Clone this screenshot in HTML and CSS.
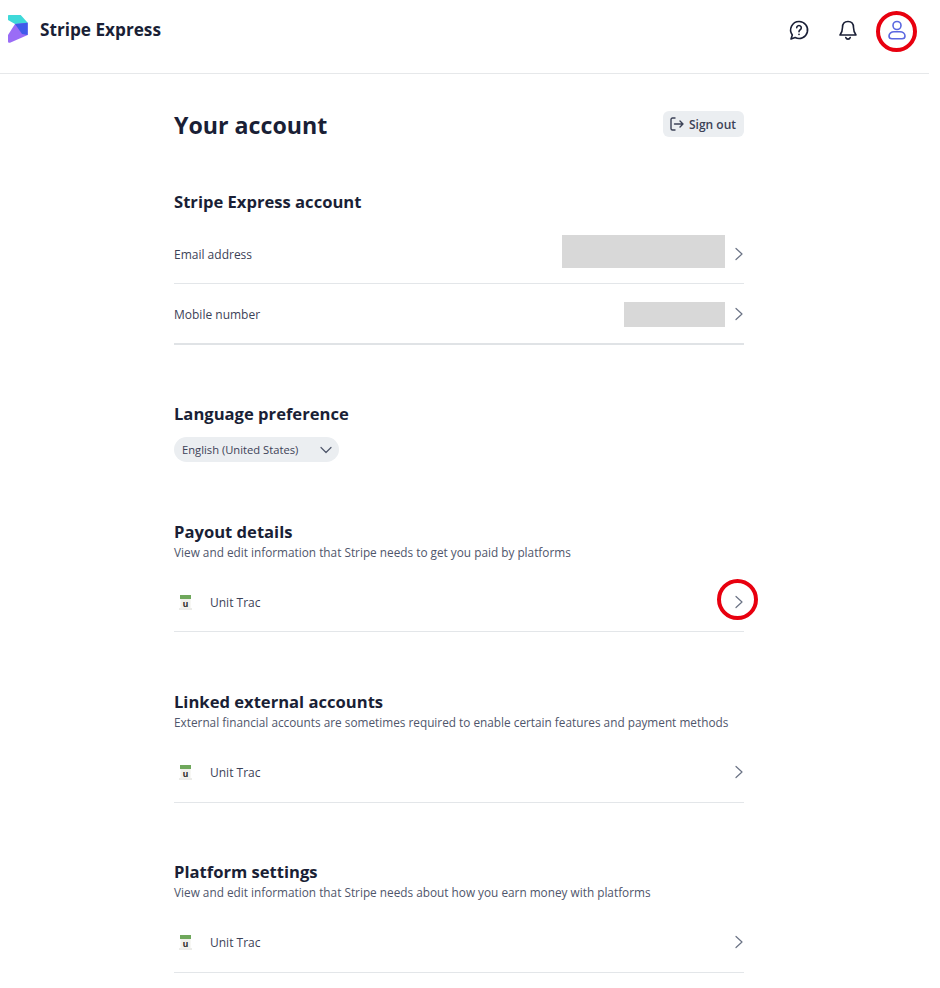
FILE: index.html
```html
<!DOCTYPE html>
<html lang="en">
<head>
<meta charset="utf-8">
<title>Stripe Express</title>
<link rel="stylesheet" href="styles.css">
</head>
<body>
<div class="page">
  <header class="topbar">
    <div class="brand">
      <svg class="logo" width="20" height="28" viewBox="0 0 20 28">
        <path d="M0 1C0 .4.4 0 1 0h11.700l7 7.700L8.700 12 7 9 0 5z" fill="#3fd9d9"/>
        <path d="M19.700 7.700V20L2 27.700c-1 .4-2-.2-2-1.300V20L7 9z" fill="#9a6cf6"/>
        <path d="M7 9 19.700 7.700V20L14 19z" fill="#3f5bea"/>
      </svg>
      <span class="brand-name">Stripe Express</span>
    </div>
    <div class="top-actions">
      <svg class="top-icon" width="22" height="22" viewBox="0 0 22 22" fill="none" stroke="#1a1f36" stroke-width="1.600" stroke-linecap="round" stroke-linejoin="round">
        <path d="M11 2.500a8.500 8.500 0 1 1-3.900 16L3 20l1.300-4A8.500 8.500 0 0 1 11 2.500z"/>
        <path d="M8.700 8.800a2.300 2.300 0 1 1 3.500 2c-.8.500-1.200 1-1.200 1.900"/>
        <path d="M11 15.300v.2"/>
      </svg>
      <svg class="top-icon" width="22" height="22" viewBox="0 0 22 22" fill="none" stroke="#1a1f36" stroke-width="1.600" stroke-linecap="round" stroke-linejoin="round">
        <path d="M11 2.500c-3.500 0-5.500 2.500-5.500 6 0 3.500-.8 5.300-2.500 7.500h16c-1.700-2.200-2.500-4-2.500-7.500 0-3.500-2-6-5.500-6z"/>
        <path d="M8.800 18.500a2.300 2.300 0 0 0 4.400 0"/>
      </svg>
      <svg class="top-icon" width="22" height="22" viewBox="0 0 22 22" fill="none" stroke="#5a67e0" stroke-width="1.600" stroke-linecap="round" stroke-linejoin="round">
        <circle cx="11" cy="6.500" r="4"/>
        <path d="M3 17c0-2.800 2.500-4.300 5-4.300h6c2.500 0 5 1.500 5 4.300 0 2-1 2.800-3 2.800H6c-2 0-3-.8-3-2.800z"/>
      </svg>
    </div>
  </header>

  <main class="content">
    <div class="title-row">
      <h1 class="title">Your account</h1>
      <button class="signout">
        <svg width="14" height="14" viewBox="0 0 14 14" fill="none" stroke="#3c4257" stroke-width="1.400" stroke-linecap="round" stroke-linejoin="round">
          <path d="M5 1H2.500C1.700 1 1 1.700 1 2.500v9c0 .8.700 1.500 1.500 1.500H5"/>
          <path d="M4.500 7H13M10 4l3 3-3 3"/>
        </svg>
        Sign out
      </button>
    </div>

    <section class="account">
      <h2 class="heading">Stripe Express account</h2>
      <div class="row row-email">
        <span class="label-plain">Email address</span>
        <span class="row-end"><span class="redact redact-email"></span>
          <svg class="chev" width="8" height="14" viewBox="0 0 8 14" fill="none" stroke="#6b7385" stroke-width="1.200" stroke-linecap="round" stroke-linejoin="round"><path d="M1 1.500 7 7l-6 5.500"/></svg></span>
      </div>
      <div class="row row-mobile">
        <span class="label-plain">Mobile number</span>
        <span class="row-end"><span class="redact redact-mobile"></span>
          <svg class="chev" width="8" height="14" viewBox="0 0 8 14" fill="none" stroke="#6b7385" stroke-width="1.200" stroke-linecap="round" stroke-linejoin="round"><path d="M1 1.500 7 7l-6 5.500"/></svg></span>
      </div>
    </section>

    <section class="language">
      <h2 class="heading">Language preference</h2>
      <div class="select">
        <span>English (United States)</span>
        <svg width="12" height="8" viewBox="0 0 12 8" fill="none" stroke="#4f566b" stroke-width="1.200" stroke-linecap="round" stroke-linejoin="round"><path d="M1 1.500 6 6.500l5-5"/></svg>
      </div>
    </section>

    <section class="block block-payout">
      <h2 class="heading">Payout details</h2>
      <p class="desc">View and edit information that Stripe needs to get you paid by platforms</p>
      <div class="row row-item row-payout">
        <span class="item">
          <svg class="thumb" width="13" height="16" viewBox="0 0 13 16"><rect x="1" y="0" width="11" height="4" fill="#6fa85c"/><rect x="1.500" y="4" width="10" height="9" fill="#f0f0ea"/><path d="M0 14h13" stroke="#d8d8d2"/><text x="6.500" y="11.500" class="thumb-u">u</text></svg>
          <span class="label-plain">Unit Trac</span>
        </span>
        <svg class="chev" width="8" height="14" viewBox="0 0 8 14" fill="none" stroke="#6b7385" stroke-width="1.200" stroke-linecap="round" stroke-linejoin="round"><path d="M1 1.500 7 7l-6 5.500"/></svg>
      </div>
      <span class="ring ring-chevron"></span>
    </section>

    <section class="block block-linked">
      <h2 class="heading">Linked external accounts</h2>
      <p class="desc">External financial accounts are sometimes required to enable certain features and payment methods</p>
      <div class="row row-item">
        <span class="item">
          <svg class="thumb" width="13" height="16" viewBox="0 0 13 16"><rect x="1" y="0" width="11" height="4" fill="#6fa85c"/><rect x="1.500" y="4" width="10" height="9" fill="#f0f0ea"/><path d="M0 14h13" stroke="#d8d8d2"/><text x="6.500" y="11.500" class="thumb-u">u</text></svg>
          <span class="label-plain">Unit Trac</span>
        </span>
        <svg class="chev" width="8" height="14" viewBox="0 0 8 14" fill="none" stroke="#6b7385" stroke-width="1.200" stroke-linecap="round" stroke-linejoin="round"><path d="M1 1.500 7 7l-6 5.500"/></svg>
      </div>
    </section>

    <section class="block block-platform">
      <h2 class="heading">Platform settings</h2>
      <p class="desc">View and edit information that Stripe needs about how you earn money with platforms</p>
      <div class="row row-item">
        <span class="item">
          <svg class="thumb" width="13" height="16" viewBox="0 0 13 16"><rect x="1" y="0" width="11" height="4" fill="#6fa85c"/><rect x="1.500" y="4" width="10" height="9" fill="#f0f0ea"/><path d="M0 14h13" stroke="#d8d8d2"/><text x="6.500" y="11.500" class="thumb-u">u</text></svg>
          <span class="label-plain">Unit Trac</span>
        </span>
        <svg class="chev" width="8" height="14" viewBox="0 0 8 14" fill="none" stroke="#6b7385" stroke-width="1.200" stroke-linecap="round" stroke-linejoin="round"><path d="M1 1.500 7 7l-6 5.500"/></svg>
      </div>
    </section>
  </main>

  <span class="ring ring-user"></span>
</div>
</body>
</html>
```
FILE: styles.css
```css
* { box-sizing: border-box; }
html, body { margin: 0; background: #fff; }
body {
  font-family: "Open Sans", "Noto Sans", "Liberation Sans", sans-serif;
  color: #1a1f36;
  height: 988px;
  overflow: hidden;
}
.page { position: relative; width: 929px; }
.topbar {
  height: 74px;
  border-bottom: 1px solid #e6e8ea;
  display: flex;
  align-items: center;
  justify-content: space-between;
  padding: 0 21px 14px 8px;
}
.brand { display: flex; align-items: center; gap: 12px; margin-top: -1px; }
.logo { display: block; }
.brand-name { font-size: 17.2px; font-weight: 700; color: #1a1f36; }
.top-actions { display: flex; align-items: center; gap: 27px; }
.top-icon { display: block; }
.content { width: 570px; margin-left: 174px; position: relative; }
.title-row {
  display: flex;
  align-items: center;
  justify-content: space-between;
  height: 100px;
}
.title { margin: 1px 0 0; font-size: 23.2px; line-height: 36px; font-weight: 700; color: #1a1f36; }
.signout {
  display: flex;
  align-items: center;
  gap: 5px;
  height: 26px;
  width: 81px;
  padding: 0 0 0 7px;
  border: 0;
  border-radius: 6px;
  background: #ebeef1;
  color: #3c4257;
  font: 600 12px "Open Sans", sans-serif;
}
.heading { margin: 0; font-size: 16.6px; line-height: 24px; font-weight: 700; color: #1a1f36; }
.desc { margin: 0; font-size: 11.8px; line-height: 16px; color: #4f566b; }
.account { padding-top: 16px; }
.row {
  display: flex;
  align-items: center;
  justify-content: space-between;
  border-bottom: 1px solid #e3e6e9;
  width: 570px;
}
.row-email { height: 60px; margin-top: 10px; }
.row-mobile { height: 61px; border-bottom: 2px solid #e0e3e6; }
.row-end { display: flex; align-items: center; gap: 10px; margin-right: 1px; }
.redact { display: block; background: #d8d8d8; }
.redact-email { width: 163px; height: 33px; margin-bottom: 4px; }
.redact-mobile { width: 101px; height: 25px; margin-top: 2px; }
.chev { display: block; }
.label-plain { font-size: 12px; font-weight: 500; color: #3c4257; padding-top: 2px; }
.language { padding-top: 57px; }
.select {
  display: flex;
  align-items: center;
  justify-content: space-between;
  width: 165px;
  height: 25px;
  margin-top: 11px;
  padding: 0 7px 0 8px;
  border-radius: 13px;
  background: #ebeef1;
  font-size: 11.2px;
  font-weight: 500;
  color: #3c4257;
}
.block { position: relative; }
.block-payout { padding-top: 58px; }
.block-linked { padding-top: 58px; }
.block-platform { padding-top: 57px; }
.row-item { height: 62px; margin-top: 11px; padding-right: 1px; }
.row-payout { height: 60px; margin-top: 12px; }
.item { display: flex; align-items: center; gap: 18px; padding-left: 5px; }
.thumb { display: block; margin-top: 2px; }
.thumb-u { font: 700 9px "Liberation Sans", sans-serif; text-anchor: middle; fill: #222; }
.ring {
  position: absolute;
  border: 4px solid #e8000f;
  border-radius: 50%;
  width: 41px;
  height: 41px;
}
.ring-user { left: 876px; top: 11px; }
.ring-chevron { right: -14px; bottom: 12px; }
```
